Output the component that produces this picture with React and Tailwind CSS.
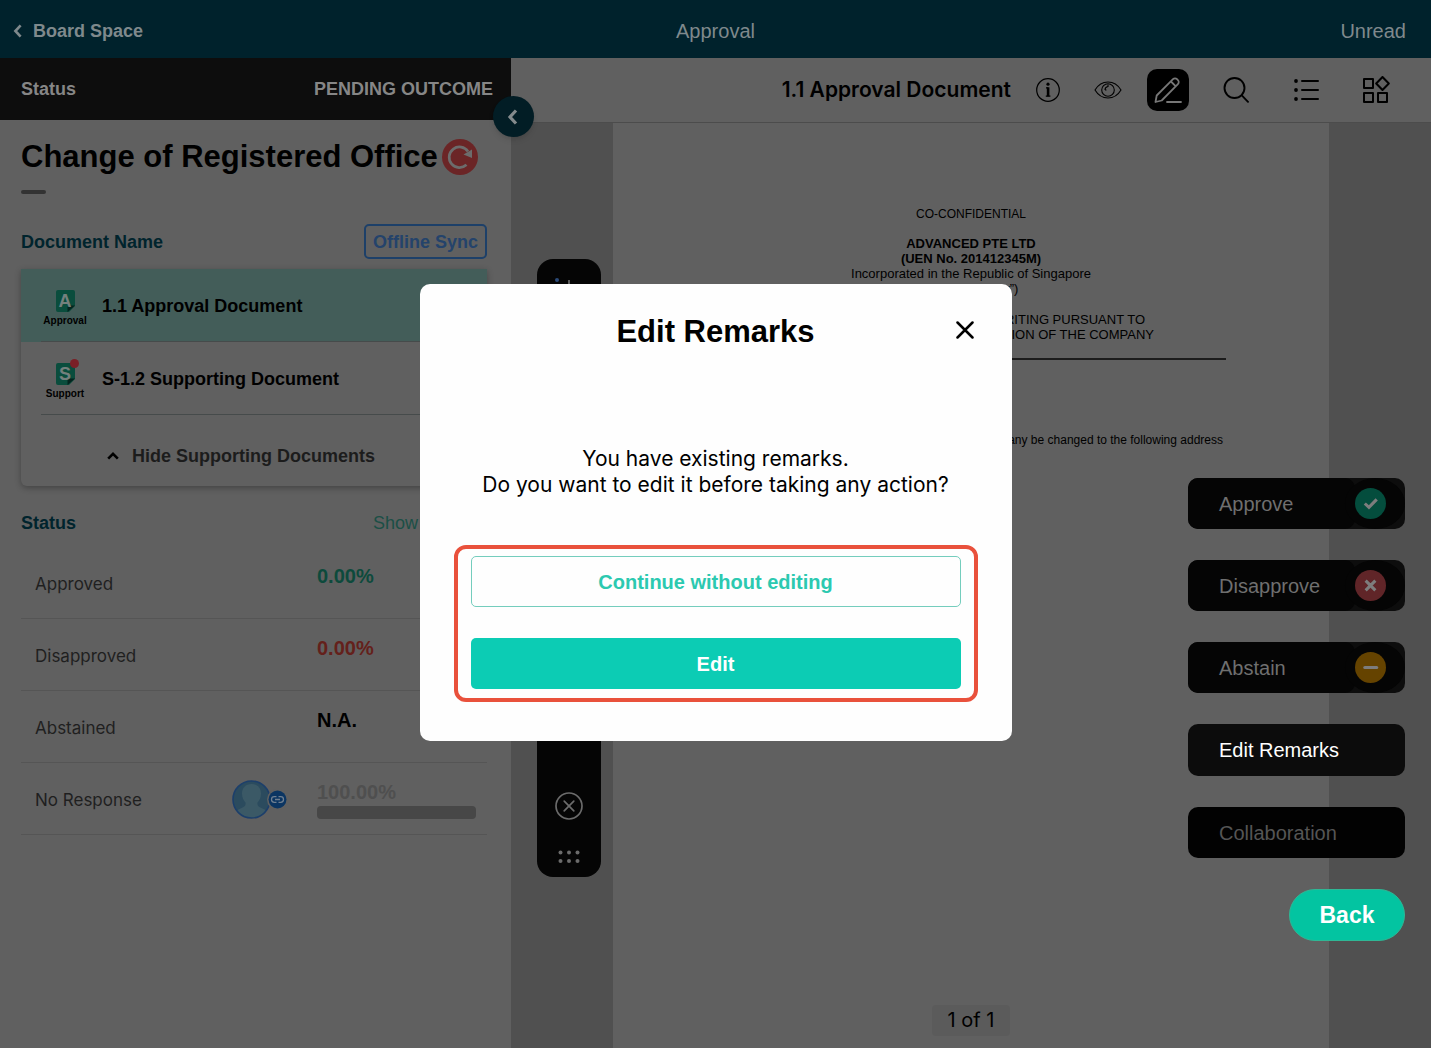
import React, { useState } from "react";

const documents = [
  { id: 1, letter: "A", type: "Approval", name: "1.1 Approval Document", active: true, unread: false },
  { id: 2, letter: "S", type: "Support", name: "S-1.2 Supporting Document", active: false, unread: true },
];

const votes = [
  { label: "Approved", value: "0.00%", color: "text-[#0d4a3c]" },
  { label: "Disapproved", value: "0.00%", color: "text-[#64201b]" },
  { label: "Abstained", value: "N.A.", color: "text-black" },
  { label: "No Response", value: "100.00%", color: "text-[#4f4f4f]", pending: true },
];

const actions = [
  { label: "Approve", icon: "check", circle: "bg-[#044d3d]" },
  { label: "Disapprove", icon: "cross", circle: "bg-[#602528]" },
  { label: "Abstain", icon: "minus", circle: "bg-[#654300]" },
];

function Chevron({ d, className, width = 3 }) {
  return (
    <svg viewBox="0 0 16 16" className={className} fill="none" stroke="currentColor" strokeWidth={width}>
      <path d={d} />
    </svg>
  );
}

function DocumentIcon({ letter, unread }) {
  return (
    <span className="relative flex h-[22px] w-[19px] items-center justify-center">
      <svg viewBox="0 0 19 22" className="absolute inset-0 h-full w-full">
        <path d="M2 0h15a2 2 0 0 1 2 2v14l-6 6H2a2 2 0 0 1-2-2V2a2 2 0 0 1 2-2z" fill="#0a4d3d" />
        <path d="M19 15.500l-7.500 6.500v-4.500a2 2 0 0 1 2-2z" fill="#04241e" />
      </svg>
      <span className="relative text-lg leading-none font-bold text-[#74807d]">{letter}</span>
      {unread && <span className="absolute -top-1 -right-1 h-[9px] w-[9px] rounded-full bg-[#7a1f26]" />}
    </span>
  );
}

function VoteIcon({ icon }) {
  return (
    <svg viewBox="0 0 30 30" className="h-full w-full" fill="none" stroke="#7d7d7d" strokeWidth="3">
      {icon === "check" && <path d="M9.500 15l4 3.800 7.500-7.800" />}
      {icon === "cross" && <path d="M10.300 10.300l9.400 9.400M19.700 10.300l-9.400 9.400" />}
      {icon === "minus" && <path d="M9.500 15h11.500" strokeLinecap="round" />}
    </svg>
  );
}

function Avatar() {
  return (
    <span className="relative h-[39px] w-[55px] shrink-0">
      <svg viewBox="0 0 55 39" className="h-full w-full">
        <defs>
          <clipPath id="avatar">
            <circle cx="19.500" cy="19.500" r="18.500" />
          </clipPath>
        </defs>
        <circle cx="19.500" cy="19.500" r="18.500" fill="#2b4b5e" />
        <g clipPath="url(#avatar)">
          <path
            d="M19.500 4c6 0 9.500 4 9.500 9.500 0 4-1.500 7-3.500 9-.5 4 1.500 4.500 5 6 3 1.300 5 3 6 5.500v6h-34v-6c1-2.500 3-4.200 6-5.500 3.500-1.500 5.500-2 5-6-2-2-3.500-5-3.500-9C10 8 13.500 4 19.500 4z"
            fill="#3b5966"
          />
        </g>
        <circle cx="19.500" cy="19.500" r="18.500" fill="none" stroke="#1c3f6b" strokeWidth="1.600" />
        <circle cx="45.500" cy="19.500" r="10.500" fill="#606060" />
        <circle cx="45.500" cy="19.500" r="9" fill="#0b3562" />
        <path
          d="M44.500 16.700h-2.200a2.800 2.800 0 0 0 0 5.600h2.200M46.500 16.700h2.200a2.800 2.800 0 0 1 0 5.600h-2.200M43 19.500h5"
          fill="none"
          stroke="#6f7f90"
          strokeWidth="1.300"
        />
      </svg>
    </span>
  );
}

function Sidebar() {
  return (
    <aside className="relative w-[511px] shrink-0 bg-[#606060]">
      <div className="flex h-[62px] items-center justify-between bg-[#0d0d0d] pr-[18px] pl-[21px] text-lg font-bold text-[#868686]">
        <span>Status</span>
        <span>PENDING OUTCOME</span>
      </div>
      <button
        type="button"
        aria-label="Collapse panel"
        className="absolute top-[38px] -right-[23px] z-10 flex h-[41px] w-[41px] items-center justify-center rounded-full bg-[#021d25] pr-[2px] text-[#848a8c] shadow-md"
      >
        <Chevron d="M11 1.500L5 8l6 6.500" className="h-4 w-4" width={3.2} />
      </button>

      <div className="pr-6 pl-[21px]">
        <div className="flex items-center gap-1 pt-[18px]">
          <h1 className="text-[31px] leading-[38px] font-bold text-black">Change of Registered Office</h1>
          <button type="button" aria-label="Refresh" className="h-9 w-9 shrink-0">
            <svg viewBox="0 0 36 36" className="h-full w-full">
              <circle cx="18" cy="18" r="18" fill="#6b2526" />
              <path d="M24.500 25.800A10.300 10.300 0 1 1 26 12.500" fill="none" stroke="#6c6c6c" strokeWidth="2.700" />
              <path d="M30 10.500v8.500l-8.500-3.500z" fill="#6c6c6c" />
            </svg>
          </button>
        </div>
        <div className="mt-[14px] h-1 w-[25px] rounded-sm bg-[#333]" />

        <div className="mt-[30px] flex items-center justify-between">
          <h2 className="text-lg font-bold text-[#00242d]">Document Name</h2>
          <button
            type="button"
            className="h-[35px] rounded-[5px] border-2 border-[#1d4069] px-[7px] text-lg leading-none font-bold text-[#24436b]"
          >
            Offline Sync
          </button>
        </div>

        <div className="mt-[10px] rounded-b-md shadow-[0_2px_6px_rgba(0,0,0,0.3)]">
          <ul>
            {documents.map((doc) => (
              <li key={doc.id} className={doc.active ? "bg-[#435d59]" : ""}>
                <a href="#" className="flex h-[72px] items-center pt-[2px] pl-[19px]">
                  <span className="flex w-[50px] flex-col items-center gap-[3px] pt-1">
                    <DocumentIcon letter={doc.letter} unread={doc.unread} />
                    <span className="text-[10px] leading-3 font-bold text-black">{doc.type}</span>
                  </span>
                  <span className="ml-3 text-lg font-bold text-black">{doc.name}</span>
                </a>
                <div className="ml-5 h-px bg-[#464b4b]" />
              </li>
            ))}
          </ul>
          <button type="button" className="flex h-[71px] w-full items-center gap-3 pt-[10px] pl-[85px] text-lg font-bold text-[#1c1c1c]">
            <Chevron d="M2.500 11L8 5.500l5.500 5.500" className="h-[14px] w-[14px] text-black" />
            Hide Supporting Documents
          </button>
        </div>

        <div className="mt-[23px] flex items-center justify-between">
          <h2 className="text-lg font-bold text-[#00242d]">Status</h2>
          <button type="button" className="w-[114px] text-left text-lg text-[#1b4f46]">
            Show Details
          </button>
        </div>

        <ul className="mt-[10px]">
          {votes.map((vote) => (
            <li key={vote.label} className="flex h-[72px] border-b border-[#555] pl-[14px]">
              <span className="flex flex-1 items-center pt-1 font-['Inter',sans-serif] text-[17px] text-[#1f1f1f]">
                {vote.label}
              </span>
              {vote.pending && (
                <span className="flex items-center pt-[2px] pr-[30px]">
                  <Avatar />
                </span>
              )}
              <span className="w-[170px] pt-[15px] pr-[11px]">
                <span className={`block text-xl leading-7 font-bold ${vote.color}`}>{vote.value}</span>
                {vote.pending && <span className="block h-[13px] rounded-[4px] bg-[#474747]" />}
              </span>
            </li>
          ))}
        </ul>
      </div>
    </aside>
  );
}

function Toolbar() {
  return (
    <div className="flex h-[65px] items-center justify-end border-b border-[#4c4c4c] pr-[34px] text-black">
      <h2 className="mr-4 font-['Inter',sans-serif] text-[21px] font-semibold">1.1 Approval Document</h2>
      <div className="flex items-center gap-[18px]">
        <button type="button" aria-label="Information" className="flex h-[42px] w-[42px] items-center justify-center">
          <svg viewBox="0 0 24 24" className="h-6 w-6" fill="none" stroke="currentColor">
            <circle cx="12" cy="12" r="11.300" strokeWidth="1.200" />
            <circle cx="12" cy="6.200" r="1.600" fill="currentColor" stroke="none" />
            <path d="M10 9.800h2.200M9.800 18.200h4.600" strokeWidth="1.200" />
            <path d="M12.100 9.300v9" strokeWidth="2.600" />
          </svg>
        </button>
        <button type="button" aria-label="View" className="flex h-[42px] w-[42px] items-center justify-center">
          <svg viewBox="0 0 28 18" className="h-[18px] w-7" fill="none" stroke="currentColor" strokeWidth="1.100">
            <path d="M1 9c3-5 7.500-8 13-8s10 3 13 8c-3 5-7.500 8-13 8S4 14 1 9z" />
            <circle cx="14" cy="9" r="6.300" />
            <path d="M11 9a3.500 3.500 0 0 1 3-3.500V3.500M11 9h1.500" />
          </svg>
        </button>
        <button type="button" aria-label="Annotate" className="flex h-[42px] w-[42px] items-center justify-center rounded-[10px] bg-black text-[#777]">
          <svg viewBox="0 0 28 28" className="h-7 w-7" fill="none" stroke="currentColor" strokeWidth="1.800" strokeLinejoin="round" strokeLinecap="round">
            <path d="M1.500 26l1.200-6.500L19 3.200a2.800 2.800 0 0 1 4 0l.9.900a2.800 2.800 0 0 1 0 4L7.700 24.500zM17 5.500l4.800 4.800M13 26h14" />
          </svg>
        </button>
      </div>
      <div className="ml-[26px] flex items-center gap-7">
        <button type="button" aria-label="Search" className="flex h-[42px] w-[42px] items-center justify-center">
          <svg viewBox="0 0 26 26" className="h-[26px] w-[26px]" fill="none" stroke="currentColor" strokeWidth="1.900" strokeLinecap="round">
            <circle cx="11.500" cy="11" r="10" />
            <path d="M18.800 18.300L25 24.800" />
          </svg>
        </button>
        <button type="button" aria-label="Outline" className="flex h-[42px] w-[42px] items-center justify-center">
          <svg viewBox="0 0 25 24" className="h-6 w-[25px]" fill="currentColor">
            <circle cx="2" cy="3" r="1.900" />
            <circle cx="2" cy="12" r="1.900" />
            <circle cx="2" cy="21" r="1.900" />
            <path d="M8 3h16M8 12h16M8 21h16" stroke="currentColor" strokeWidth="2" strokeLinecap="round" />
          </svg>
        </button>
        <button type="button" aria-label="Apps" className="flex h-[42px] w-[42px] items-center justify-center">
          <svg viewBox="0 0 28 28" className="h-7 w-7" fill="none" stroke="currentColor" strokeWidth="2" strokeLinejoin="round">
            <path d="M2 3h9v9H2zM2 17h9v9H2zM16 17h9v9h-9zM20.500 1l6.300 6.500-6.300 6.500-6.300-6.500z" />
          </svg>
        </button>
      </div>
    </div>
  );
}

function Viewer({ onEdit }) {
  return (
    <main className="relative flex min-w-0 flex-1 flex-col bg-[#606060]">
      <Toolbar />
      <div className="flex flex-1 bg-[#505050] px-[102px]">
        <article className="flex flex-1 flex-col bg-[#606060] px-[103px] pt-[83px] text-[13px] leading-[15px] text-black">
          <div className="text-center whitespace-nowrap">
            <p className="text-xs">CO-CONFIDENTIAL</p>
            <p className="mt-[14px] font-bold">ADVANCED PTE LTD</p>
            <p className="font-bold">(UEN No. 201412345M)</p>
            <p>Incorporated in the Republic of Singapore</p>
            <p>(the “Company”)</p>
            <p className="mt-4">DIRECTORS’ RESOLUTIONS IN WRITING PURSUANT TO</p>
            <p>REGULATION 9 OF THE CONSTITUTION OF THE COMPANY</p>
          </div>
          <hr className="mt-4 border-t-2 border-[#1c1c1c]" />
          <p className="mt-[72px] pr-[3px] text-right text-xs whitespace-nowrap">
            That the registered office of the Company be changed to the following address
          </p>
          <div className="mt-auto mb-3 self-center rounded bg-[#5b5b5b] px-4 py-[5px] font-['Inter',sans-serif] text-xl leading-[21px]">
            1 of 1
          </div>
        </article>
      </div>

      {/* Floating annotation toolbar */}
      <div className="absolute top-[201px] left-[26px] flex h-[618px] w-16 flex-col items-center rounded-2xl bg-[#050505] pb-[13px]">
        <svg viewBox="0 0 28 28" className="mt-4 h-7 w-7" fill="none" stroke="#777" strokeWidth="1.500">
          <circle cx="2" cy="5" r="2" fill="#2b4a78" stroke="none" />
          <path d="M14 5v19M4 14h20" />
        </svg>
        <button type="button" aria-label="Close annotations" className="mt-auto">
          <svg viewBox="0 0 28 28" className="h-7 w-7" fill="none" stroke="#6b6b6b" strokeWidth="1.700" strokeLinecap="round">
            <circle cx="14" cy="14" r="13" />
            <path d="M9.200 9.200l9.600 9.600M18.800 9.200l-9.600 9.600" />
          </svg>
        </button>
        <svg viewBox="0 0 22 14" className="mt-[30px] h-[14px] w-[22px]" fill="#6b6b6b">
          <circle cx="2.500" cy="2.500" r="2" />
          <circle cx="11" cy="2.500" r="2" />
          <circle cx="19.500" cy="2.500" r="2" />
          <circle cx="2.500" cy="11" r="2" />
          <circle cx="11" cy="11" r="2" />
          <circle cx="19.500" cy="11" r="2" />
        </svg>
      </div>

      {/* Action menu */}
      <div className="absolute top-[420px] right-[26px] flex w-[217px] flex-col items-end gap-[31px] text-xl">
        {actions.map((action) => (
          <button
            key={action.label}
            type="button"
            className="flex h-[51px] w-full items-center overflow-hidden rounded-[10px] bg-[#0d0d0d] text-[#6f6f6f]"
          >
            <span className="flex h-full flex-1 items-center rounded-r-[10px] bg-[#050505] pl-[31px]">{action.label}</span>
            <span className="-ml-[10px] flex h-full w-[60px] items-center justify-center rounded-[50%] bg-[#050505] pr-[9px]">
              <span className={`h-[31px] w-[31px] rounded-full ${action.circle}`}>
                <VoteIcon icon={action.icon} />
              </span>
            </span>
          </button>
        ))}
        <button type="button" onClick={onEdit} className="h-[52px] w-full rounded-[10px] bg-[#0c0c0c] pl-[31px] text-left text-white">
          Edit Remarks
        </button>
        <button type="button" className="h-[51px] w-full rounded-[10px] bg-[#020202] pl-[31px] text-left text-[#555]">
          Collaboration
        </button>
        <button type="button" className="h-[52px] w-[116px] rounded-full border border-[#2fb795] bg-[#03c4a1] text-[23px] font-bold text-white">
          Back
        </button>
      </div>
    </main>
  );
}

function EditRemarksDialog({ onClose }) {
  return (
    <div className="pointer-events-none fixed inset-0 z-20 flex items-center justify-center pb-[23px]">
      <div
        role="dialog"
        aria-labelledby="dialog-title"
        className="pointer-events-auto relative w-full max-w-[592px] rounded-[10px] bg-[#fefefe] px-[34px] pt-[29px] pb-[39px]"
      >
        <h2 id="dialog-title" className="text-center text-[31px] leading-[38px] font-bold text-black">
          Edit Remarks
        </h2>
        <button type="button" aria-label="Close" onClick={onClose} className="absolute top-[37px] right-[38px]">
          <svg viewBox="0 0 18 18" className="h-[18px] w-[18px]" fill="none" stroke="black" strokeWidth="2.500" strokeLinecap="round">
            <path d="M1.500 1.500l15 15M16.500 1.500l-15 15" />
          </svg>
        </button>
        <p className="mt-[95px] text-center font-['Inter',sans-serif] text-[21px] leading-[26px] text-black">
          You have existing remarks.
          <br />
          Do you want to edit it before taking any action?
        </p>
        <div className="mt-[47px] flex flex-col gap-[31px] rounded-xl border-4 border-[#e9513c] px-[13px] pt-[7px] pb-[9px] text-xl font-bold">
          <button type="button" onClick={onClose} className="h-[51px] rounded-[5px] border border-[#74cdbd] text-[#2cc9b0]">
            Continue without editing
          </button>
          <button type="button" className="h-[51px] rounded-[5px] bg-[#0cccb4] text-white">
            Edit
          </button>
        </div>
      </div>
    </div>
  );
}

export default function App() {
  const [open, setOpen] = useState(true);

  return (
    <div className="flex min-h-screen flex-col bg-[#606060] font-['Liberation_Sans',Arial,sans-serif]">
      <header className="grid h-[58px] grid-cols-3 items-center bg-[#00222c] pt-[3px] pr-[25px] pl-[11px] text-[#7f898c]">
        <a href="#" className="flex items-center gap-2 text-lg font-bold">
          <Chevron d="M11 1.500L5 8l6 6.500" className="h-[14px] w-[14px]" />
          Board Space
        </a>
        <h1 className="pl-[14px] text-center text-xl">Approval</h1>
        <button type="button" className="justify-self-end text-xl">
          Unread
        </button>
      </header>
      <div className="flex flex-1">
        <Sidebar />
        <Viewer onEdit={() => setOpen(true)} />
      </div>
      {open && <EditRemarksDialog onClose={() => setOpen(false)} />}
    </div>
  );
}
